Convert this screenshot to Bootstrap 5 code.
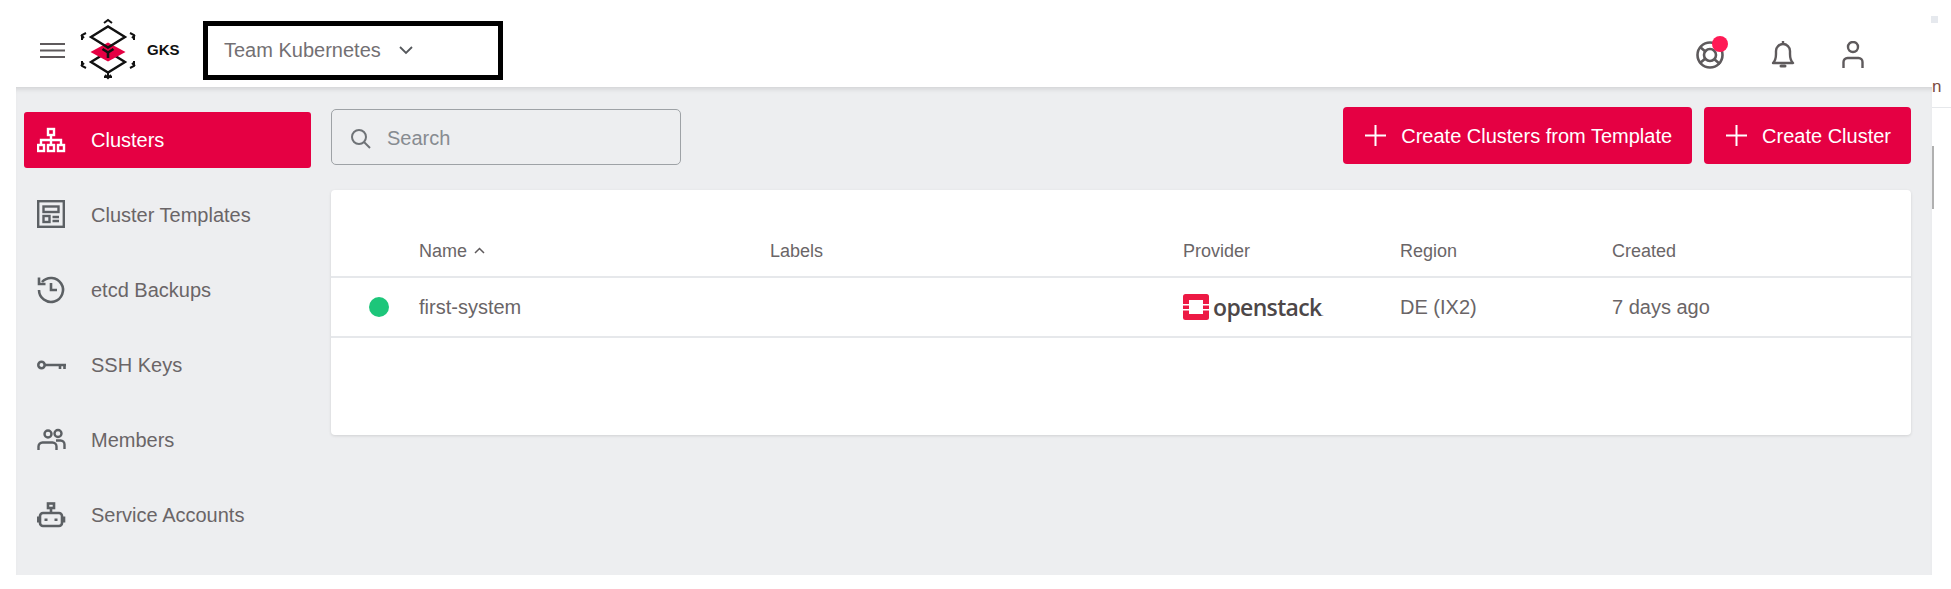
<!DOCTYPE html>
<html lang="en">
<head>
  <meta charset="UTF-8" />
  <meta name="viewport" content="width=device-width, initial-scale=1.0" />
  <title>GKS - Clusters</title>
  <link href="https://cdn.jsdelivr.net/npm/bootstrap@5.3.0/dist/css/bootstrap.min.css" rel="stylesheet">
  <style>
    html, body { height: 100%; }
    body {
      background: #fff;
      font-family: "Liberation Sans", Arial, sans-serif;
      color: #6a6567;
      overflow: hidden;
    }
    .top-bar {
      height: 87px;
      padding: 13px 0 0 40px;
      position: relative;
      z-index: 2;
    }
    .burger { width: 25px; height: 15px; margin-right: 13px; display: block; }
    .brand-mark { width: 60px; height: 64px; display: block; }
    .brand-name { font-size: 15px; font-weight: 700; color: #111; margin-left: 9px; width: 33px; }
    .team-box {
      width: 300px;
      height: 59px;
      margin-left: 23px;
      border: 5px solid #000;
      padding-left: 16px;
      font-size: 20px;
      color: #737073;
    }
    .team-box svg { width: 14px; height: 9px; margin-left: 18px; }
    .top-icons { margin: 9px 67px 0 auto; gap: 47px; }
    .top-icons svg { display: block; }
    .help-wrap { position: relative; width: 28px; height: 28px; }
    .help-dot {
      position: absolute;
      top: -5px;
      right: -4px;
      width: 16px;
      height: 16px;
      border-radius: 50%;
      background: #ff1a55;
    }
    .stray-box { width: 7px; height: 7px; background: #e6e9ee; align-self: flex-start; margin: 3px 13px 0 0; }

    .app-row { height: 488px; }
    .app-main {
      width: 1916px;
      margin-left: 16px;
      background: #edeef0;
      box-shadow: inset 0 5px 5px -3px rgba(0, 0, 0, .12);
    }
    .side-nav { width: 315px; padding: 25px 0 0 8px; flex: none; }
    .side-link {
      width: 287px;
      height: 56px;
      margin-bottom: 19px;
      padding-left: 13px;
      border-radius: 3px;
      font-size: 20px;
      color: #6a6567;
      text-decoration: none;
    }
    .side-link svg { width: 30px; height: 30px; margin-right: 24px; flex: none; }
    .side-link.active-link { background: #e50043; color: #fff; }
    .content-pane { flex: 1; padding: 20px 21px 0 0; }
    .search-box {
      width: 350px;
      height: 56px;
      margin-top: 2px;
      border: 1px solid #9ea2a6;
      border-radius: 5px;
      padding: 2px 0 0 18px;
      font-size: 20px;
      color: #878b90;
    }
    .search-box svg { width: 21px; height: 21px; margin-right: 16px; }
    .red-btn {
      height: 57px;
      background: #e50043;
      border: 0;
      border-radius: 4px;
      color: #fff;
      font-size: 20px;
      padding: 0 20px 0 22px;
    }
    .red-btn:hover { background: #e50043; color: #fff; }
    .red-btn svg { width: 21px; height: 21px; margin-right: 15px; }
    .cluster-card {
      height: 245px;
      margin-top: 25px;
      border: 0;
      border-radius: 4px;
      box-shadow: 0 1px 3px rgba(0, 0, 0, .12);
    }
    .cluster-table { table-layout: fixed; margin: 0; --bs-table-color: #6a6567; }
    .cluster-table th {
      height: 87px;
      padding: 0 0 15px;
      vertical-align: bottom;
      font-size: 18px;
      line-height: 20px;
      font-weight: 400;
      border-bottom: 2px solid #e6e8eb;
    }
    .cluster-table td {
      height: 60px;
      padding: 0;
      vertical-align: middle;
      font-size: 20px;
      border-bottom: 2px solid #e6e8eb;
    }
    .col-dot { width: 88px; }
    .col-name { width: 351px; }
    .col-labels { width: 413px; }
    .col-provider { width: 217px; }
    .col-region { width: 212px; }
    .status-dot { display: block; width: 20px; height: 20px; margin-left: 38px; border-radius: 50%; background: #1dc67a; }
    .sort-caret { width: 11px; height: 7px; margin-left: 2px; vertical-align: 3px; }
    .stack-mark { width: 26px; height: 26px; margin-right: 4px; }
    .stack-name { font-family: "Open Sans", sans-serif; font-size: 23px; font-weight: 600; letter-spacing: -.65px; color: #4d4748; line-height: 1; }
    .stack-dot { font-size: 9px; font-weight: 400; color: #888; }

    .stray-edge { width: 19px; position: relative; z-index: 3; margin-top: -8px; }
    .stray-letter { height: 29px; font-size: 17px; color: #7b4b42; line-height: 15px; border-bottom: 1px solid #e6e8eb; }
    .stray-rule { width: 2px; height: 63px; margin-top: 38px; background: #b0b0b0; }
  </style>
</head>
<body>

<header class="top-bar d-flex align-items-center bg-white">
  <svg class="burger" viewBox="0 0 25 15"><path d="M0 1h25M0 7.500h25M0 14h25" stroke="#5e5a5c" stroke-width="2"/></svg>
  <svg class="brand-mark" viewBox="0 0 60 64" fill="none" stroke="#111" stroke-width="2.400">
    <path d="M13 44 30 33.500 47 44 30 54.500z"/>
    <path d="M12.500 34 30 24.500 47.500 34 30 43.500z" fill="#e50043" stroke="none"/>
    <path d="M13 19 30 8.500 47 19 30 29.500z"/>
    <path d="M24.500 31l5.500 3.500 5.500-3.500M30 34.500v5.500" stroke-width="2.600"/>
    <path d="M26 5l4-3 4 3M26 59h8M30 54v6M27 57l3 3 3-3" stroke-width="2"/>
    <path d="M8 15l-4 2v5M3 17l3 3M52 15l4 2v5M57 17l-3 3M8 50l-4-2v-5M3 48l3-3M52 50l4-2v-5M57 48l-3-3" stroke-width="2"/>
  </svg>
  <span class="brand-name">GKS</span>
  <div class="team-box d-flex align-items-center">
    Team Kubernetes
    <svg viewBox="0 0 14 9" fill="none" stroke="#55585c" stroke-width="1.800"><path d="M1 1l6 6 6-6"/></svg>
  </div>
  <div class="top-icons d-flex align-items-center">
    <div class="help-wrap">
      <svg width="28" height="28" viewBox="0 0 28 28" fill="none" stroke="#5e5a5c" stroke-width="2.600">
        <circle cx="14" cy="14" r="12.500"/><circle cx="14" cy="14" r="6"/>
        <path d="M4 6l6 5M4 22l6-5M18 18l6 5"/>
      </svg>
      <span class="help-dot"></span>
    </div>
    <svg width="24" height="27" viewBox="0 0 24 27" fill="none" stroke="#5e5a5c" stroke-width="2.400">
      <path d="M2 22c2-2 3-4 3-9V10a7 7 0 0 1 14 0v3c0 5 1 7 3 9z" stroke-linejoin="round"/>
      <path d="M10 25h4" stroke-width="3" stroke-linecap="round"/><path d="M12 0v3"/>
    </svg>
    <svg width="22" height="28" viewBox="0 0 22 28" fill="none" stroke="#5e5a5c" stroke-width="2.400">
      <circle cx="11" cy="6" r="5"/>
      <path d="M1.500 27v-6a4 4 0 0 1 4-4h11a4 4 0 0 1 4 4v6"/>
    </svg>
  </div>
  <span class="stray-box"></span>
</header>

<div class="app-row d-flex">
  <div class="app-main d-flex">
    <nav class="side-nav">
      <a class="side-link active-link d-flex align-items-center" href="#">
        <svg viewBox="0 0 30 30" fill="none" stroke="#fff" stroke-width="2.400">
          <rect x="11" y="4" width="6" height="6"/><rect x="1" y="20" width="6" height="6"/><rect x="11" y="20" width="6" height="6"/><rect x="21" y="20" width="6" height="6"/>
          <path d="M14 10v10M4 20v-5h20v5"/>
        </svg>Clusters
      </a>
      <a class="side-link d-flex align-items-center" href="#">
        <svg viewBox="0 0 30 30" fill="none" stroke="#5c6064" stroke-width="2.400">
          <rect x="1.200" y="1.200" width="25.600" height="25.600"/><rect x="6.500" y="6.500" width="15" height="5.500"/><rect x="6.500" y="16" width="6" height="6"/><path d="M15.500 17h6.500M15.500 21h6.500"/>
        </svg>Cluster Templates
      </a>
      <a class="side-link d-flex align-items-center" href="#">
        <svg viewBox="0 0 30 30" fill="none" stroke="#5c6064" stroke-width="2.600">
          <path d="M5 7a12 12 0 1 1-3 8"/><path d="M2 2.500v6.500h6.500"/><path d="M14 8v7h6"/>
        </svg>etcd Backups
      </a>
      <a class="side-link d-flex align-items-center" href="#">
        <svg viewBox="0 0 30 30" fill="none" stroke="#5c6064" stroke-width="2.600">
          <circle cx="4.500" cy="15" r="3.200"/><path d="M8 15h21M23 15v4M27.500 15v4"/>
        </svg>SSH Keys
      </a>
      <a class="side-link d-flex align-items-center" href="#">
        <svg viewBox="0 0 30 30" fill="none" stroke="#5c6064" stroke-width="2.400">
          <circle cx="11" cy="9" r="3.500"/><circle cx="21" cy="8.500" r="3.500"/>
          <path d="M1.500 25v-3.500a4 4 0 0 1 4-4h10a4 4 0 0 1 4 4V25M19 15.500h4.500a4 4 0 0 1 4 4V24"/>
        </svg>Members
      </a>
      <a class="side-link d-flex align-items-center" href="#">
        <svg viewBox="0 0 30 30" fill="none" stroke="#5c6064" stroke-width="2.600">
          <rect x="11" y="3.500" width="6" height="4.500"/><path d="M14 8v5"/>
          <rect x="3" y="13" width="22" height="13" rx="3" /><path d="M1 16.500v6M27 16.500v6"/>
          <path d="M9 18.500v2.500M19 18.500v2.500" stroke-width="3"/>
        </svg>Service Accounts
      </a>
    </nav>

    <main class="content-pane">
      <div class="d-flex align-items-start justify-content-between">
        <div class="search-box d-flex align-items-center">
          <svg viewBox="0 0 21 21" fill="none" stroke="#6f7377" stroke-width="2"><circle cx="9" cy="9" r="7"/><path d="M14 14l6 6"/></svg>
          Search
        </div>
        <div class="d-flex gap-2">
          <button class="btn red-btn d-flex align-items-center me-1" type="button">
            <svg viewBox="0 0 21 21" stroke="#fff" stroke-width="2"><path d="M10.500 0v21M0 10.500h21"/></svg>Create Clusters from Template
          </button>
          <button class="btn red-btn d-flex align-items-center" type="button">
            <svg viewBox="0 0 21 21" stroke="#fff" stroke-width="2"><path d="M10.500 0v21M0 10.500h21"/></svg>Create Cluster
          </button>
        </div>
      </div>

      <div class="card cluster-card">
        <table class="table cluster-table">
          <thead>
            <tr>
              <th class="col-dot"></th>
              <th class="col-name">Name <svg class="sort-caret" viewBox="0 0 11 7" fill="none" stroke="#5e5a5c" stroke-width="1.500"><path d="M1 6l4.500-4.500L10 6"/></svg></th>
              <th class="col-labels">Labels</th>
              <th class="col-provider">Provider</th>
              <th class="col-region">Region</th>
              <th>Created</th>
            </tr>
          </thead>
          <tbody>
            <tr>
              <td><span class="status-dot"></span></td>
              <td>first-system</td>
              <td></td>
              <td>
                <div class="d-flex align-items-center">
                  <svg class="stack-mark" viewBox="0 0 26 26">
                    <rect width="26" height="26" rx="2.500" fill="#ed1944"/>
                    <rect x="6" y="6" width="14" height="14" fill="#fff"/>
                    <path d="M0 10h6v1.500H0zM0 15h6v1.500H0zM20 10h6v1.500h-6zM20 15h6v1.500h-6z" fill="#fff"/>
                  </svg>
                  <span class="stack-name">openstack<span class="stack-dot">.</span></span>
                </div>
              </td>
              <td>DE (IX2)</td>
              <td>7 days ago</td>
            </tr>
          </tbody>
        </table>
      </div>
    </main>
  </div>
  <aside class="stray-edge">
    <div class="stray-letter">n</div>
    <div class="stray-rule"></div>
  </aside>
</div>

<script src="https://cdn.jsdelivr.net/npm/bootstrap@5.3.0/dist/js/bootstrap.bundle.min.js"></script>
</body>
</html>
